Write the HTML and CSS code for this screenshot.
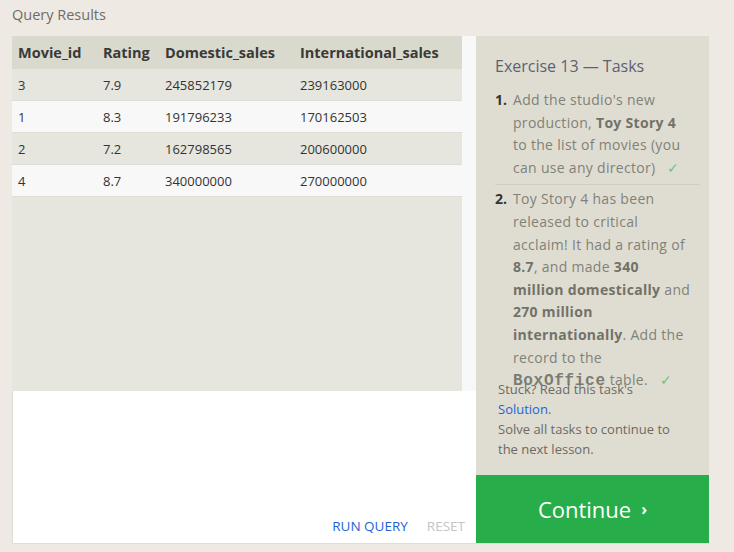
FILE: index.html
```html
<!DOCTYPE html>
<html>
<head>
<meta charset="utf-8">
<link rel="stylesheet" href="styles.css">
</head>
<body>
<div class="page">
  <h2 class="title">Query Results</h2>
  <div class="main">
    <section class="left">
      <div class="results">
        <div class="table-wrap">
          <table class="grid">
            <colgroup>
              <col class="c1"><col class="c2"><col class="c3"><col class="c4">
            </colgroup>
            <thead>
              <tr><th>Movie_id</th><th>Rating</th><th>Domestic_sales</th><th>International_sales</th></tr>
            </thead>
            <tbody>
              <tr><td>3</td><td>7.9</td><td>245852179</td><td>239163000</td></tr>
              <tr><td>1</td><td>8.3</td><td>191796233</td><td>170162503</td></tr>
              <tr><td>2</td><td>7.2</td><td>162798565</td><td>200600000</td></tr>
              <tr><td>4</td><td>8.7</td><td>340000000</td><td>270000000</td></tr>
            </tbody>
          </table>
        </div>
        <div class="scrollbar"></div>
      </div>
      <div class="editor">
        <div class="actions">
          <span class="run">RUN QUERY</span>
          <span class="reset">RESET</span>
        </div>
      </div>
    </section>
    <aside class="right">
      <div class="tasks">
        <h3 class="tasks-title">Exercise 13 — Tasks</h3>
        <ol class="task-list">
          <li class="task first">
            <span class="num">1.</span>
            <span class="text">Add the studio's new<br>production, <b>Toy Story 4</b><br>to the list of movies (you<br>can use any director) <span class="check">✓</span></span>
          </li>
          <li class="task">
            <span class="num">2.</span>
            <span class="text">Toy Story 4 has been<br>released to critical<br>acclaim! It had a rating of<br><b>8.7</b>, and made <b>340</b><br><b>million domestically</b> and<br><b>270 million</b><br><b>internationally</b>. Add the<br>record to the<br><code>BoxOffice</code> table. <span class="check">✓</span></span>
          </li>
        </ol>
      </div>
      <div class="stuck">
        <p>Stuck? Read this task's <a class="link">Solution</a>.</p>
        <p>Solve all tasks to continue to the next lesson.</p>
      </div>
      <div class="continue">Continue <span class="arrow">›</span></div>
    </aside>
  </div>
</div>
</body>
</html>
```

FILE: styles.css
```css
html, body {
  margin: 0;
  padding: 0;
  background: #eeeae3;
  font-family: "Open Sans", "Noto Sans", sans-serif;
}

.page {
  width: 734px;
  height: 552px;
}

.title {
  margin: 0;
  padding-left: 12px;
  height: 36px;
  line-height: 30px;
  font-size: 14.5px;
  font-weight: normal;
  color: #6d6d68;
}

.main {
  display: flex;
  margin-left: 12px;
  width: 697px;
}

.left {
  width: 464px;
  display: flex;
  flex-direction: column;
}

.results {
  height: 355px;
  display: flex;
}

.table-wrap {
  width: 450px;
  background: #e6e6de;
}

.scrollbar {
  width: 14px;
  background: #f8f8f8;
}

.grid {
  width: 450px;
  border-collapse: collapse;
  table-layout: fixed;
  color: #333;
}

.c1 { width: 85px; }
.c2 { width: 62px; }
.c3 { width: 135px; }
.c4 { width: 168px; }

.grid th {
  background: #d9d9ce;
  height: 33px;
  padding: 0 0 0 6px;
  text-align: left;
  font-size: 14.5px;
  font-weight: 700;
  color: #3a3a36;
}

.grid td {
  height: 31px;
  padding: 0 0 0 6px;
  font-size: 13px;
  color: #333;
  border-bottom: 1px solid #dfded6;
}

.grid tbody tr:nth-child(odd) td {
  background: #e6e6de;
}

.grid tbody tr:nth-child(even) td {
  background: #f8f8f8;
}

.editor {
  height: 152px;
  background: #fff;
  border-left: 1px solid #e0ddd5;
  border-bottom: 1px solid #e0ddd5;
  display: flex;
  align-items: flex-end;
  justify-content: flex-end;
}

.actions {
  display: flex;
  gap: 19px;
  padding: 0 11px 7px 0;
  line-height: 20px;
  font-size: 13.5px;
  font-weight: 500;
}

.run {
  color: #1f62d6;
}

.reset {
  color: #c4c4c4;
}

.right {
  width: 233px;
  height: 508px;
  background: #dfddd2;
  display: flex;
  flex-direction: column;
}

.tasks {
  height: 343px;
  padding: 19px 9px 0 19px;
  box-sizing: border-box;
}

.tasks-title {
  margin: 0 0 12px;
  font-size: 16px;
  line-height: 22px;
  font-weight: normal;
  color: #5c6172;
}

.task-list {
  list-style: none;
  margin: 0;
  padding: 0;
}

.task {
  display: grid;
  grid-template-columns: 18px 1fr;
  font-size: 14px;
  line-height: 22.6px;
  letter-spacing: 0.3px;
  color: #818178;
}

.task.first {
  padding-bottom: 5px;
  border-bottom: 1px solid #d0cec4;
}

.task + .task {
  padding-top: 3px;
}

.task .text {
  grid-column: 2;
  white-space: nowrap;
}

.num {
  font-weight: 700;
  color: #333;
  letter-spacing: 0;
}

.task b {
  color: #727269;
}

.task code {
  font-family: "Liberation Mono", monospace;
  font-weight: 700;
  font-size: 16px;
  line-height: 1;
  letter-spacing: 0.7px;
  color: #7c7c73;
}

.check {
  color: #6cc47e;
  margin-left: 8px;
}

.stuck {
  height: 96px;
  padding: 0 26px 0 22px;
  box-sizing: border-box;
  font-size: 13px;
  line-height: 20px;
  color: #6d6962;
}

.stuck p {
  margin: 0;
}

.link {
  color: #1f62d6;
}

.continue {
  height: 68px;
  background: #28ad4b;
  color: #fff;
  font-size: 22px;
  display: flex;
  align-items: center;
  justify-content: center;
}

.arrow {
  font-size: 16px;
  font-weight: 700;
  margin-left: 10px;
}
```
